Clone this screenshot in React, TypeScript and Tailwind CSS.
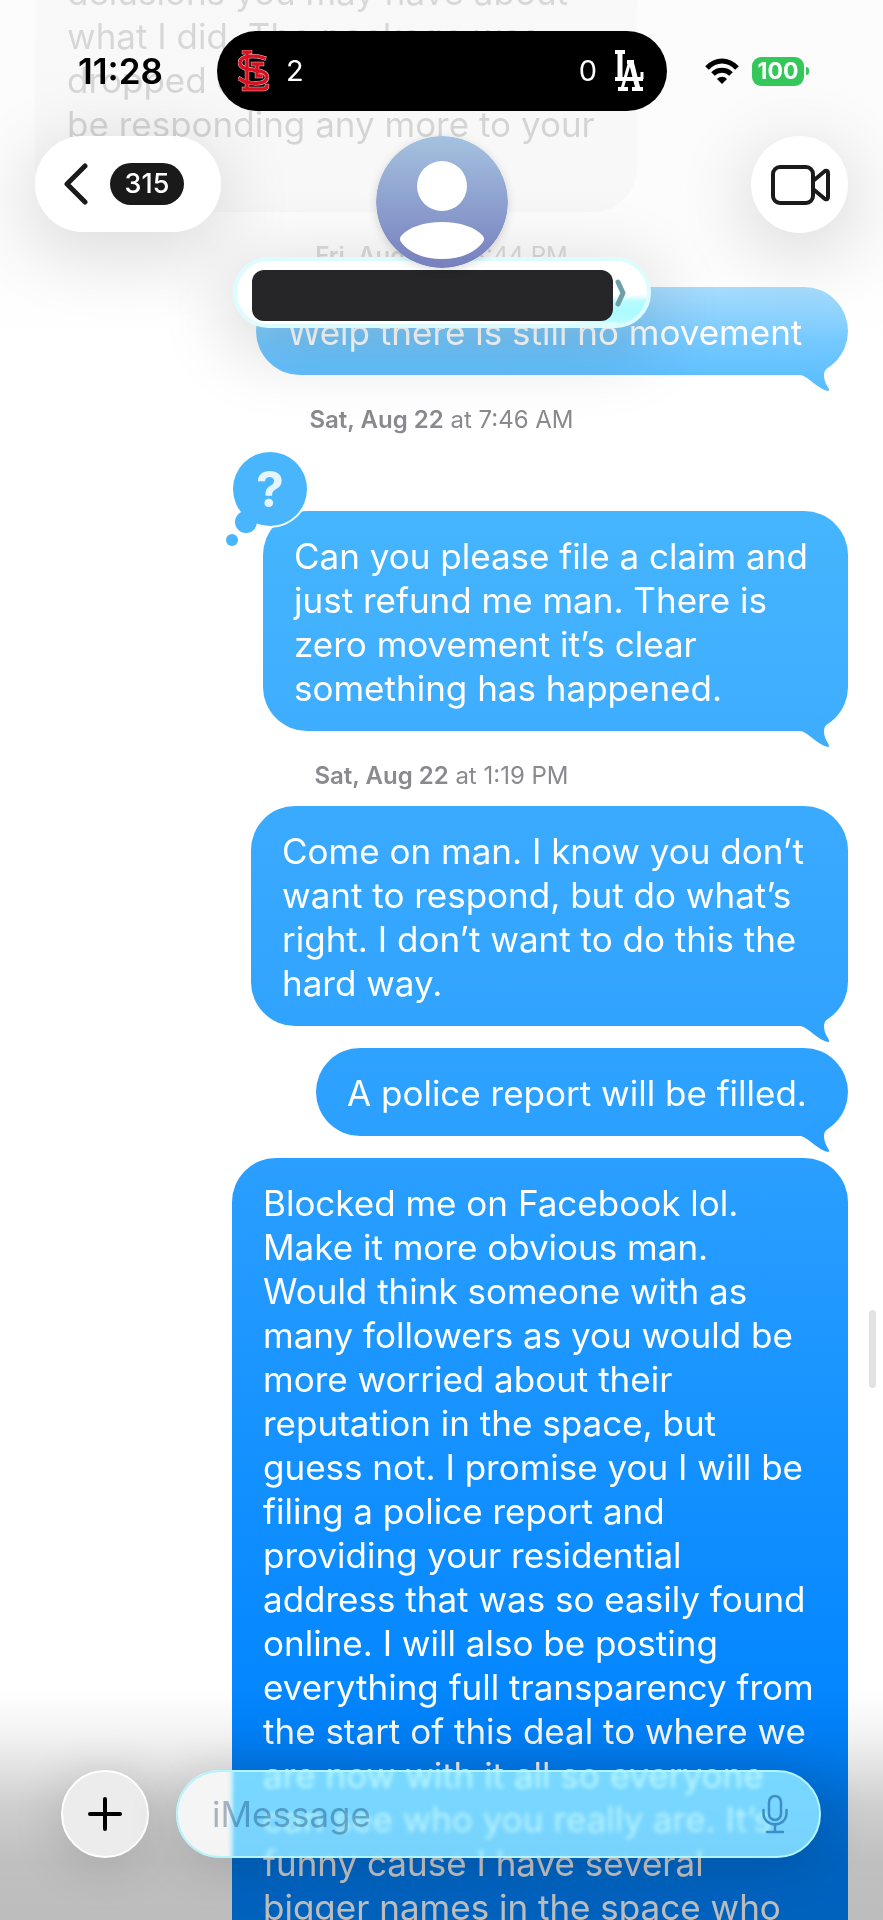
import React from 'react';

type Message = {
  id: number;
  text: string;
  width: string;
  tail?: string;
  stamp?: { day: string; time: string };
  questioned?: boolean;
};

const messages: Message[] = [
  {
    id: 1,
    text: 'Welp there is still no movement',
    width: 'w-[592px]',
    tail: 'text-[#52bbff]',
  },
  {
    id: 2,
    text: 'Can you please file a claim and\njust refund me man. There is\nzero movement it’s clear\nsomething has happened.',
    width: 'w-[585px]',
    tail: 'text-[#3eadfe]',
    stamp: { day: 'Sat, Aug 22', time: '7:46 AM' },
    questioned: true,
  },
  {
    id: 3,
    text: 'Come on man. I know you don’t\nwant to respond, but do what’s\nright. I don’t want to do this the\nhard way.',
    width: 'w-[597px]',
    tail: 'text-[#30a3ff]',
    stamp: { day: 'Sat, Aug 22', time: '1:19 PM' },
  },
  {
    id: 4,
    text: 'A police report will be filled.',
    width: 'w-[532px]',
    tail: 'text-[#2b9fff]',
  },
  {
    id: 5,
    text: 'Blocked me on Facebook lol.\nMake it more obvious man.\nWould think someone with as\nmany followers as you would be\nmore worried about their\nreputation in the space, but\nguess not. I promise you I will be\nfiling a police report and\nproviding your residential\naddress that was so easily found\nonline. I will also be posting\neverything full transparency from\nthe start of this deal to where we\nare now with it all so everyone\ncan see who you really are. It’s\nfunny cause I have several\nbigger names in the space who',
    width: 'w-[616px]',
  },
];

function Stamp({ day, time }: { day: string; time: string }) {
  return (
    <p className="text-center text-[24px] leading-[30px] text-[#8a8a8e]">
      <span className="font-semibold">{day}</span> at {time}
    </p>
  );
}

function Tapback() {
  return (
    <div className="absolute -left-[37px] -top-[60px] h-[96px] w-[84px]">
      <svg viewBox="0 0 84 96" className="h-full w-full" aria-hidden="true">
        <circle cx="44" cy="38" r="39" fill="#fff" />
        <circle cx="44" cy="38" r="37" fill="#48b5fd" />
        <circle cx="20" cy="71" r="11" fill="#48b5fd" />
        <circle cx="6" cy="89" r="6" fill="#48b5fd" />
      </svg>
      <span className="absolute left-[7px] top-0 w-[74px] text-center text-[50px] font-bold leading-[76px] text-[#e4f5ff]">
        ?
      </span>
    </div>
  );
}

function Bubble({ message }: { message: Message }) {
  return (
    <div
      className={`relative max-w-full self-end bg-[linear-gradient(180deg,#63c6ff_0px,#52bbff_375px,#46b5fe_511px,#3eadfe_731px,#30a3ff_1026px,#2a9fff_1160px,#0084ff_1740px,#0084ff_1920px)] bg-fixed pb-[21px] pl-[31px] pt-[23px] text-white ${
        message.tail ? 'rounded-[44px]' : 'rounded-t-[44px]'
      } ${message.width}`}
    >
      {message.questioned && <Tapback />}
      <p className="whitespace-pre text-[35px] leading-[44px]">{message.text}</p>
      {message.tail && (
        <svg
          viewBox="0 0 40 34"
          className={`absolute -bottom-4 right-[11px] h-[34px] w-[40px] ${message.tail}`}
          aria-hidden="true"
        >
          <path
            fill="currentColor"
            d="M4 18C12 20 22 33 31 34C35 33 27 28 27 18C27 13 31 10 36 6L18 2Z"
          />
        </svg>
      )}
    </div>
  );
}

function CardinalsLogo() {
  const strokes = (
    <>
      <path d="M9 2v36M6 2h6M6 39h19q4 0 4-3" />
      <path d="M26 8C17 5 2 5 2 13c0 10 27 4 27 14 0 8-18 8-27 2" />
      <path d="M15 14h9M19 14v12h4" />
    </>
  );

  return (
    <svg viewBox="0 0 32 42" className="h-[42px] w-8" aria-label="St. Louis">
      <g fill="none" stroke="#f6c9cd" strokeWidth="4.4" strokeLinecap="square">
        {strokes}
      </g>
      <g fill="none" stroke="#d8101f" strokeWidth="3.4" strokeLinecap="square">
        {strokes}
      </g>
    </svg>
  );
}

function DodgersLogo() {
  return (
    <svg viewBox="0 0 30 42" className="h-[42px] w-[30px]" aria-label="Los Angeles">
      <g fill="none" stroke="#fff">
        <path strokeWidth="4" d="M0 2h10M0 29h28" />
        <path strokeWidth="5" d="M5 2v27" />
        <path strokeWidth="3" d="M27 22v7" />
        <path strokeWidth="3" d="M7 39L15 11" />
        <path strokeWidth="5" d="M16 11l7 28" />
        <path strokeWidth="4" d="M12 12h7M3 39h10M17 39h11" />
      </g>
    </svg>
  );
}

function StatusBar() {
  return (
    <div className="flex h-20 items-center justify-between">
      <div className="flex w-[217px] justify-center pl-6 text-[35px] font-semibold text-black">
        11:28
      </div>
      <div className="flex h-20 flex-1 items-center justify-between rounded-full bg-black pl-[21px] pr-[22px] text-[29px] text-white">
        <div className="flex items-center gap-4">
          <CardinalsLogo />
          <span>2</span>
        </div>
        <div className="flex items-center gap-[18px]">
          <span>0</span>
          <DodgersLogo />
        </div>
      </div>
      <div className="flex w-[216px] items-center pl-[38px]">
        <svg viewBox="0 0 34 26" className="h-[26px] w-[34px]" aria-label="Wi-Fi">
          <g fill="none" stroke="#000" strokeWidth="5">
            <path d="M2 10C11 .6 23 .6 32 10" />
            <path d="M8 16c5-5 13-5 18 0" />
          </g>
          <path d="M17 26l-5-5c3-3 7-3 10 0z" />
        </svg>
        <div className="ml-[13px] flex items-center gap-0.5">
          <span className="flex h-[29px] w-[52px] items-center justify-center rounded-[9px] bg-[#34c759] text-[23px] font-bold text-white">
            100
          </span>
          <span className="h-2 w-[3px] rounded-r-full bg-[#34c759]" />
        </div>
      </div>
    </div>
  );
}

function Header() {
  return (
    <header className="absolute inset-x-0 top-0 h-[400px] bg-[linear-gradient(180deg,rgba(251,251,251,0.86)_0px,rgba(251,251,251,0.84)_180px,rgba(251,251,251,0.7)_256px,rgba(251,251,251,0.48)_290px,rgba(255,255,255,0.2)_340px,rgba(255,255,255,0)_400px)] pt-[31px]">
      <StatusBar />
      <div className="flex items-start justify-between px-[35px] pt-[25px]">
        <div className="flex flex-1">
          <button
            type="button"
            aria-label="Back"
            className="flex h-24 w-[186px] items-center gap-[22px] rounded-full bg-white/95 pl-[29px] shadow-[0_16px_70px_10px_rgba(0,0,0,0.12)]"
          >
            <svg viewBox="0 0 24 42" className="h-[42px] w-6" aria-hidden="true">
              <path
                d="M21 3L3 21l18 18"
                fill="none"
                stroke="#1a1a1a"
                strokeWidth="5"
                strokeLinecap="round"
                strokeLinejoin="round"
              />
            </svg>
            <span className="flex h-[42px] w-[74px] items-center justify-center rounded-full bg-[#1a1a1a] text-[27px] font-medium text-white">
              315
            </span>
          </button>
        </div>
        <div className="flex flex-col items-center">
          <svg
            viewBox="0 0 132 132"
            className="relative z-10 h-[132px] w-[132px] rounded-full shadow-[0_2px_10px_rgba(0,0,0,0.15)]"
            aria-label="Contact photo"
          >
            <defs>
              <linearGradient id="avatar" x1="0" y1="0" x2="0" y2="1">
                <stop offset="0" stopColor="#a5c2e0" />
                <stop offset="1" stopColor="#7680bd" />
              </linearGradient>
            </defs>
            <circle cx="66" cy="66" r="66" fill="url(#avatar)" />
            <circle cx="66" cy="50" r="25" fill="#fff" />
            <path
              fill="#fff"
              d="M25 100C33 91 48 86 66 86s33 5 41 14q2 3 0 6c-8 11-23 17-41 17s-33-6-41-17q-2-3 0-6z"
            />
          </svg>
          <button
            type="button"
            aria-label="Contact details"
            className="-mt-[11px] flex h-[71px] w-[418px] items-end gap-0.5 rounded-full border-4 border-[#dcfcfe] bg-[radial-gradient(ellipse_at_100%_80%,#a9fbff_0%,#b8fbff_14%,#ffffff_24%)] pb-[3px] pl-[15px] shadow-[0_16px_70px_10px_rgba(0,0,0,0.14)]"
          >
            <span className="h-[51px] w-[361px] rounded-xl bg-[#262628]" />
            <svg viewBox="0 0 11 28" className="mb-[14px] h-7 w-[11px]" aria-hidden="true">
              <path
                d="M3 3l5 11-5 11"
                fill="none"
                stroke="#6fa0a8"
                strokeWidth="5"
                strokeLinecap="round"
                strokeLinejoin="round"
              />
            </svg>
          </button>
        </div>
        <div className="flex flex-1 justify-end">
          <button
            type="button"
            aria-label="Video call"
            className="flex h-[97px] w-[97px] items-center justify-center rounded-full bg-white shadow-[0_16px_70px_10px_rgba(0,0,0,0.12)]"
          >
            <svg viewBox="0 0 60 40" className="h-10 w-[60px]" aria-hidden="true">
              <g fill="none" stroke="#1a1a1a" strokeWidth="4" strokeLinejoin="round">
                <rect x="3" y="2" width="40" height="36" rx="7" />
                <path d="M43 16l12-10q3-1 3 2v24q0 3-3 2L43 24" />
              </g>
            </svg>
          </button>
        </div>
      </div>
    </header>
  );
}

function Composer() {
  return (
    <footer className="absolute inset-x-0 bottom-0 flex h-[230px] items-end gap-[27px] bg-[linear-gradient(180deg,rgba(0,0,0,0)_0%,rgba(0,0,0,0.05)_20%,rgba(0,0,0,0.19)_50%,rgba(0,0,0,0.25)_75%,rgba(0,0,0,0.26)_100%)] pb-[62px] pl-[61px] pr-[62px]">
      <button
        type="button"
        aria-label="Add attachment"
        className="flex h-[88px] w-[88px] shrink-0 items-center justify-center rounded-full border-2 border-white bg-[#ececec] shadow-[0_8px_50px_4px_rgba(0,0,0,0.12)]"
      >
        <svg viewBox="0 0 34 34" className="h-[34px] w-[34px]" aria-hidden="true">
          <path d="M17 2v30M2 17h30" stroke="#000" strokeWidth="4" strokeLinecap="round" />
        </svg>
      </button>
      <div className="flex h-[88px] min-w-0 flex-1 items-center rounded-full border-2 border-[#b4f4ff] bg-[linear-gradient(90deg,rgba(244,244,244,0.9)_0px,rgba(244,244,244,0.9)_49px,rgba(160,240,255,0.75)_57px)] pl-[34px] pr-[31px] shadow-[0_8px_50px_4px_rgba(0,0,0,0.12)] backdrop-blur-[2px] backdrop-brightness-125">
        <input
          type="text"
          aria-label="iMessage"
          placeholder="iMessage"
          className="min-w-0 flex-1 bg-transparent text-[35px] outline-none placeholder:text-[rgba(0,40,80,0.33)]"
        />
        <button type="button" aria-label="Dictate">
          <svg viewBox="0 0 26 40" className="h-10 w-[26px]" aria-hidden="true">
            <g fill="none" stroke="#3b8fc6" strokeWidth="2.5" strokeLinecap="round">
              <rect x="7" y="2" width="12" height="24" rx="6" />
              <path d="M1.500 16v3c0 15 23 15 23 0v-3M13 31v7M5 38h16" />
            </g>
          </svg>
        </button>
      </div>
    </footer>
  );
}

export default function App() {
  return (
    <div className="relative h-screen overflow-hidden bg-white font-['Inter','Liberation_Sans',sans-serif]">
      <main className="-mt-[52px] flex flex-col px-[35px]">
        <div className="h-[264px] w-[602px] rounded-[44px] bg-[#e9e9eb] px-8 py-[22px] text-black">
          <p className="whitespace-pre text-[35px] leading-[44px]">
            {'delusions you may have about\nwhat I did. The package was\ndropped off and I will not\nbe responding any more to your'}
          </p>
        </div>
        <div className="pb-4 pt-[29px]">
          <Stamp day="Fri, Aug 21" time="8:44 PM" />
        </div>
        {messages.map((message) => (
          <React.Fragment key={message.id}>
            {message.stamp ? (
              <div className={message.questioned ? 'pb-[76px] pt-[30px]' : 'pb-[15px] pt-[30px]'}>
                <Stamp day={message.stamp.day} time={message.stamp.time} />
              </div>
            ) : (
              message.id > 1 && <div className="h-[22px]" />
            )}
            <Bubble message={message} />
          </React.Fragment>
        ))}
      </main>
      <div className="absolute right-[7px] top-[1310px] h-[78px] w-[7px] rounded-full bg-[#e2e2e2]" />
      <Header />
      <Composer />
    </div>
  );
}
